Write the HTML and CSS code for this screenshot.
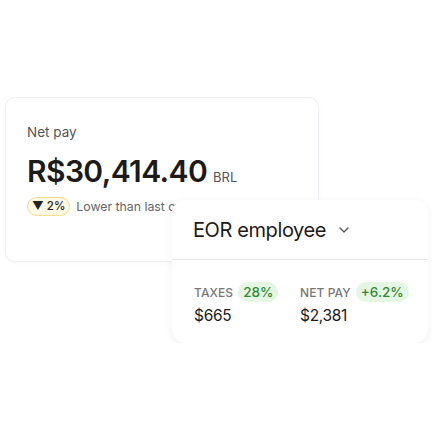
FILE: index.html
```html
<!DOCTYPE html>
<html lang="en">

<head>
    <meta charset="UTF-8">
    <meta name="viewport" content="width=device-width, initial-scale=1.0">
    <title>Net pay</title>
    <link rel="stylesheet" href="styles.css">
</head>

<body>

    <div class="stage">
        <!-- Net pay summary -->
        <div class="card card-pay">
            <p class="pay-label">Net pay</p>
            <div class="pay-amount">
                <span class="amount">R$30,414.40</span>
                <span class="currency">BRL</span>
            </div>
            <div class="pay-trend">
                <span class="badge-down">&#9660; 2%</span>
                <span class="trend-text">Lower than last cycle</span>
            </div>
        </div>

        <!-- Employee breakdown -->
        <div class="card card-employee">
            <div class="employee-head">
                <span class="employee-title">EOR employee</span>
                <svg class="chevron" width="10" height="6" viewBox="0 0 10 6">
                    <path d="M1 1l4 4 4-4" fill="none" stroke="#555" stroke-width="1.3" stroke-linecap="round"
                        stroke-linejoin="round" />
                </svg>
            </div>
            <div class="employee-body">
                <div class="stat">
                    <div class="stat-top">
                        <span class="stat-label">TAXES</span>
                        <span class="pill-green">28%</span>
                    </div>
                    <div class="stat-value">$665</div>
                </div>
                <div class="stat">
                    <div class="stat-top">
                        <span class="stat-label">NET PAY</span>
                        <span class="pill-green">+6.2%</span>
                    </div>
                    <div class="stat-value">$2,381</div>
                </div>
            </div>
        </div>
    </div>

</body>

</html>
```

FILE: styles.css
```css
body {
    font-family: Inter, "Noto Sans", sans-serif;
    margin: 0;
    padding: 0;
    background-color: #fff;
    color: #1a1a1a;
}

.stage {
    padding: 97px 0 0 5px;
}

.card {
    background: #fff;
    box-sizing: border-box;
}

.card-pay {
    width: 314px;
    height: 165px;
    border: 1px solid #f0f0f4;
    border-radius: 10px;
    box-shadow: 0 1px 4px rgba(0, 0, 0, 0.03);
    padding: 24px 21px 0;
}

.pay-label {
    margin: 0;
    font-size: 13.5px;
    color: #555;
    line-height: 20px;
}

.pay-amount {
    display: flex;
    align-items: baseline;
    gap: 6px;
    margin-top: 11px;
}

.amount {
    font-size: 30px;
    font-weight: 600;
    letter-spacing: -0.6px;
    color: #1b1b1b;
}

.currency {
    font-size: 13px;
    color: #555;
}

.pay-trend {
    display: flex;
    align-items: center;
    gap: 6px;
    margin-top: 8px;
    white-space: nowrap;
}

.badge-down {
    background: #fff8e3;
    border: 1px solid #f6dc8c;
    border-radius: 10px;
    padding: 1px 4px;
    font-size: 11.5px;
    font-weight: 500;
    color: #222;
    line-height: 15px;
}

.trend-text {
    font-size: 12.3px;
    color: #666;
}

.card-employee {
    position: relative;
    width: 256px;
    height: 143px;
    margin: -62px 0 0 167px;
    border-radius: 14px;
    box-shadow: 0 2px 10px rgba(0, 0, 0, 0.06);
}

.employee-head {
    display: flex;
    align-items: center;
    gap: 13px;
    height: 60px;
    padding-left: 21px;
    border-bottom: 1px solid #e8e8ec;
    box-sizing: border-box;
}

.employee-title {
    font-size: 20px;
    letter-spacing: -0.4px;
    color: #1b1b1b;
}

.employee-body {
    display: flex;
    padding: 22px 0 0 22px;
}

.stat {
    width: 106px;
}

.stat-top {
    display: flex;
    align-items: center;
    gap: 5px;
    white-space: nowrap;
}

.stat-label {
    font-size: 12px;
    font-weight: 500;
    color: #777;
    letter-spacing: 0.1px;
}

.pill-green {
    background: #e5f6e3;
    color: #2f8a36;
    font-size: 13.5px;
    font-weight: 500;
    border-radius: 10px;
    padding: 1px 5px;
    line-height: 18px;
}

.stat-value {
    font-size: 15.5px;
    letter-spacing: -0.3px;
    color: #1b1b1b;
    margin-top: 4px;
}
```
